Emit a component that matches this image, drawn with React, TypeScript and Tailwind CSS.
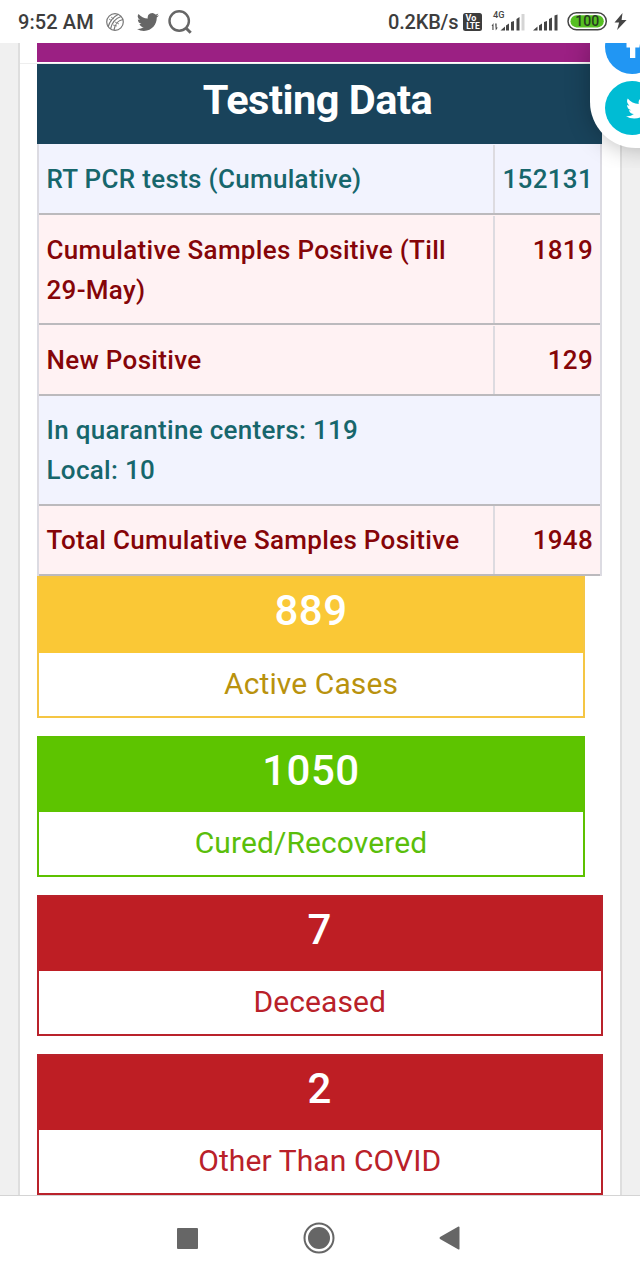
import type { ReactNode } from "react";

type Tone = "teal" | "red";

const tones: Record<Tone, string> = {
  teal: "bg-[#f2f3fe] text-[#17666c]",
  red: "bg-[#fff2f3] text-[#850508]",
};

function DataRow({ tone, size, value, children }: { tone: Tone; size: string; value?: string; children: ReactNode }) {
  return (
    <div className={`flex border-b-2 border-[#bcbabd] ${size} ${tones[tone]}`}>
      <div className="flex-1 pl-[7.5px]">{children}</div>
      {value && (
        <div className="-mt-[14px] w-[107px] border-l-2 border-[#dddbe0] pr-[7px] pt-[14px] text-right">{value}</div>
      )}
    </div>
  );
}

function StatCard({ value, label, size, fill, text, head = "h-[74px]" }: { value: string; label: string; size: string; fill: string; text: string; head?: string }) {
  return (
    <div className={`flex shrink-0 flex-col border-2 ${size} ${fill}`}>
      <div className={`${head} text-center text-[42px] leading-[66px] font-medium tracking-[0.5px] text-white`}>{value}</div>
      <div className={`flex-1 bg-white text-center text-[30px] leading-[61px] tracking-[0.1px] ${text}`}>{label}</div>
    </div>
  );
}

function TwitterBird({ className }: { className: string }) {
  return (
    <svg viewBox="0 0 24 24" className={className} fill="currentColor">
      <path d="M23.95 4.57a10 10 0 0 1-2.82.77 4.96 4.96 0 0 0 2.16-2.72c-.95.55-2 .96-3.13 1.18a4.92 4.92 0 0 0-8.38 4.48C7.69 8.1 4.07 6.13 1.64 3.16a4.93 4.93 0 0 0 1.52 6.57 4.9 4.9 0 0 1-2.23-.61v.06c0 2.39 1.7 4.38 3.95 4.83a5 5 0 0 1-2.21.08 4.94 4.94 0 0 0 4.6 3.42A9.87 9.87 0 0 1 0 19.54a14 14 0 0 0 7.55 2.21c9.05 0 14-7.5 14-13.98 0-.21 0-.42-.02-.63a9.9 9.9 0 0 0 2.42-2.57z" />
    </svg>
  );
}

function StatusBar() {
  return (
    <header className="flex h-[43px] shrink-0 items-center bg-white pl-[18px] text-[20px] font-medium text-[#3d3d3d]">
      <span className="w-[87px] whitespace-nowrap tracking-[0.1px]">9:52 AM</span>
      <svg viewBox="0 0 20 20" className="size-5 text-[#777]" fill="none" stroke="currentColor" strokeWidth="1.2">
        <circle cx="10" cy="10" r="8.3" />
        <path d="M3 15C5 9 8 5 13 2.5M5.5 17C7 10 10 6.5 16 4.5M9 18.2C10 12 12 8.5 18 7.5" />
        <path d="M4 7l3 2M6 5l3 2M8 13l4 1M10 10l4 2" strokeWidth=".8" />
      </svg>
      <TwitterBird className="ml-[12px] size-[22px] text-[#666]" />
      <svg viewBox="0 0 26 26" className="ml-[8px] size-[26px] text-[#666]" fill="none" stroke="currentColor" strokeWidth="2.4">
        <circle cx="12.2" cy="12" r="9.7" />
        <path d="M18.7 18.7l5 5" strokeWidth="3" />
      </svg>
      <span className="ml-auto w-[74px] whitespace-nowrap tracking-[-0.2px]">0.2KB/s</span>
      <svg viewBox="0 0 20 20" className="h-[20px] w-[21px] shrink-0">
        <rect x=".5" y="1" width="19" height="18" rx="2.5" fill="#3d3d3d" />
        <text x="8.5" y="9.3" textAnchor="middle" fill="white" fontFamily="Roboto" fontWeight="700" fontSize="9">Vo</text>
        <text x="10.5" y="17.2" textAnchor="middle" fill="white" fontFamily="Roboto" fontWeight="700" fontSize="8.5">LTE</text>
      </svg>
      <svg viewBox="0 0 70 28" className="ml-2 h-7 w-[70px] shrink-0" fill="#454545">
        <text x="2" y="10.3" fontFamily="Roboto" fontSize="9.2" fontWeight="500">4G</text>
        <path d="M.5 18l2-3v7H1.4v-4zM4.2 15.5h1.4v4h1.2l-2 3z" />
        <path d="M9.5 22.5h4.5v-4zM15 17.5l3-2v7h-3zM20 14l3-1v9.5h-3zM25.5 11l3-2v13.5h-3z" />
        <path d="M30.5 6h3v16.5h-3z" fill="#d5d5d5" />
        <path d="M42 22.5h4.5v-4zM48 17.5l3-2v7h-3zM53 14l3-1v9.5h-3zM58 11l3-1.5v13h-3zM63.5 7.5l3-1v16h-3z" />
      </svg>
      <svg viewBox="0 0 62 24" className="ml-[5px] mr-[12px] h-6 w-[62px] shrink-0">
        <rect x="2" y="2.8" width="38.3" height="17" rx="8.5" fill="white" stroke="#454545" strokeWidth="1.5" />
        <rect x="4.5" y="5.2" width="33.3" height="12.2" rx="6.1" fill="#55bf22" />
        <text x="21.2" y="16.3" textAnchor="middle" fill="#263b21" fontFamily="Roboto" fontWeight="500" fontSize="14">100</text>
        <path d="M56.5 3l-8 9.5h4.6l-2 7.5 9.5-10h-5z" fill="#454545" />
      </svg>
    </header>
  );
}

export default function App() {
  return (
    <div className="relative flex h-[1280px] w-[640px] flex-col overflow-hidden bg-white font-['Roboto',sans-serif]">
      <StatusBar />
      <main className="flex h-[1152px] shrink-0 overflow-hidden bg-[#f0f0f0]">
        <div className="ml-[18px] h-full w-[604px] border-x-2 border-[#dedede] bg-white">
          <div className="ml-[17px] w-[565px]">
            <div className="h-[19px] bg-[#9b2083]" />
            <div className="-ml-[17px] h-[2px] border-b border-[#eeeeee]" />
            <h1 className="h-[80px] bg-[#19435b] pr-[4px] text-center text-[41.5px] leading-[71px] font-bold tracking-[-0.5px] text-white">Testing Data</h1>
            <section className="h-[432px] border-x-2 border-[#dcdbe2] text-[26px] leading-[40px] font-medium tracking-[0.31px]">
              <DataRow tone="teal" size="h-[71px] pt-[15px]" value="152131">RT PCR tests (Cumulative)</DataRow>
              <DataRow tone="red" size="h-[110px] pt-[15px]" value="1819">Cumulative Samples Positive (Till<br />29-May)</DataRow>
              <DataRow tone="red" size="h-[71px] pt-[15px]" value="129">New Positive</DataRow>
              <DataRow tone="teal" size="h-[110px] pt-[14px]">In quarantine centers: 119<br />Local: 10</DataRow>
              <DataRow tone="red" size="h-[70px] pt-[14px]" value="1948">Total Cumulative Samples Positive</DataRow>
            </section>
            <section className="flex flex-col gap-[18px]">
              <StatCard value="889" label="Active Cases" size="h-[142px] w-[548px]" head="h-[75px]" fill="border-[#f5c644] bg-[#fac836]" text="text-[#b9920e]" />
              <StatCard value="1050" label="Cured/Recovered" size="h-[141px] w-[548px]" fill="border-[#5dc100] bg-[#5dc400]" text="text-[#5abe0b]" />
              <StatCard value="7" label="Deceased" size="h-[141px] w-[565.5px]" fill="border-[#b9222b] bg-[#be1e24]" text="text-[#b92129]" />
              <StatCard value="2" label="Other Than COVID" size="h-[141px] w-[565.5px]" fill="border-[#b9222b] bg-[#be1e24]" text="text-[#b92129]" />
            </section>
          </div>
        </div>
      </main>
      <nav className="flex h-[85px] shrink-0 items-center justify-between border-t border-[#d4d4d4] bg-white pl-[176.5px] pr-[180px]">
        <div className="size-[21px] rounded-[1px] bg-[#666]" />
        <svg viewBox="0 0 32 32" className="ml-[2px] size-8" fill="#666">
          <circle cx="16" cy="16" r="14.5" fill="none" stroke="#666" strokeWidth="2" />
          <circle cx="16" cy="16" r="11" />
        </svg>
        <svg viewBox="0 0 21 24" className="h-6 w-[21px]" fill="#666">
          <path d="M20.5 1v22q-.5 1-1.5.3L1 13q-1-1 0-2L19 .7q1-.7 1.5.3z" />
        </svg>
      </nav>
      <div className="pointer-events-none absolute right-0 top-[43px] h-[125px] w-[100px] overflow-hidden">
        <div className="ml-[49.5px] flex h-[105px] w-[120px] flex-col rounded-bl-[46px] bg-white pl-[15.5px] shadow-[0_0_24px_rgba(0,0,0,0.28)]">
          <div className="-mt-[23px] flex size-[54px] shrink-0 items-center justify-center overflow-hidden rounded-full bg-[#2196f3] text-white">
            <svg viewBox="0 0 24 30" className="-ml-px mt-[11px] h-[30px] w-6 shrink-0" fill="currentColor"><path d="M10 20V9.5H6.5v-4.5H10V2c0-4.5 2.5-6.5 6-6.5h3.5V0h-2.5c-1.4 0-1.7 1-1.7 2.5V5h4.8l-.7 4.5h-4.1V20z" /></svg>
          </div>
          <div className="mt-[7px] flex size-[54px] shrink-0 items-center justify-center rounded-full bg-[#00bcd4] text-white">
            <TwitterBird className="ml-[14px] size-[26px] shrink-0" />
          </div>
        </div>
      </div>
    </div>
  );
}
